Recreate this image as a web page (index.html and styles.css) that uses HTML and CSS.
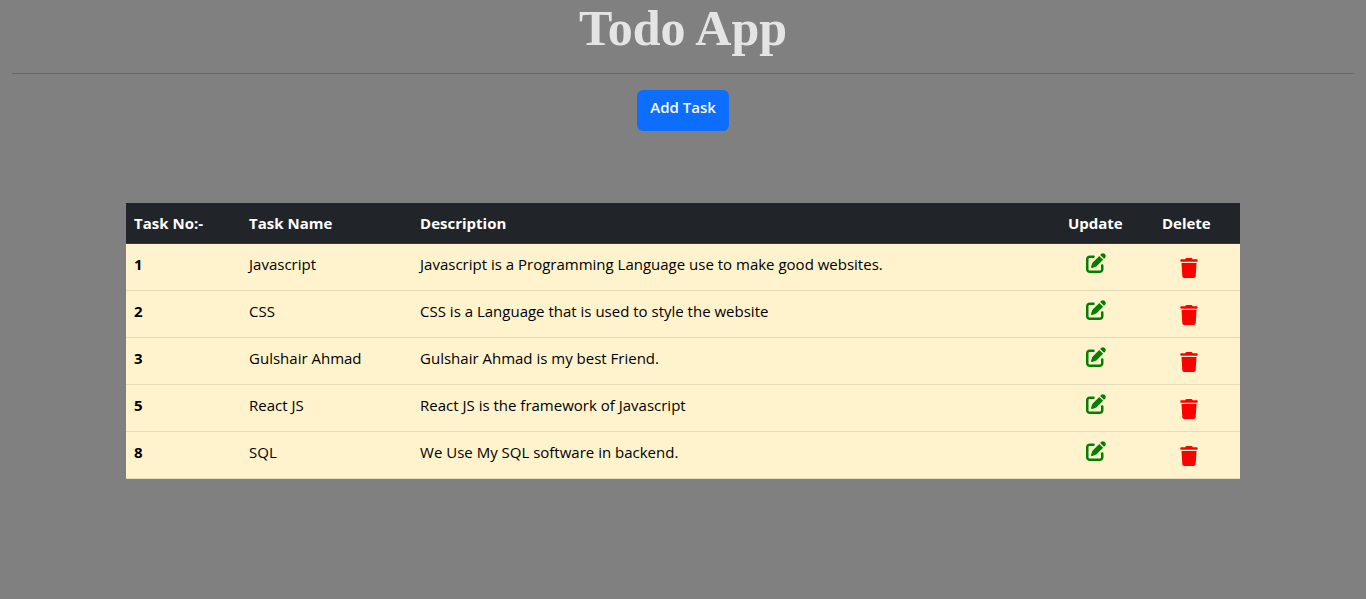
FILE: index.html
```html
<!DOCTYPE html>
<html lang="en">
<head>
  <meta charset="utf-8">
  <meta name="viewport" content="width=device-width, initial-scale=1">
  <title>Todo App</title>
  <link rel="stylesheet" href="styles.css">
</head>
<body>
  <svg class="sprite" aria-hidden="true">
    <symbol id="icon-edit" viewBox="0 0 512 512">
      <path d="M471.6 21.7c-21.9-21.9-57.3-21.9-79.2 0L362.3 51.7l97.9 97.9 30.1-30.1c21.9-21.9 21.9-57.3 0-79.2L471.6 21.7zm-299.2 220c-6.1 6.1-10.8 13.6-13.5 21.9l-29.6 88.8c-2.9 8.6-.6 18.1 5.8 24.6s15.9 8.7 24.6 5.8l88.8-29.6c8.2-2.7 15.7-7.4 21.9-13.5L437.7 172.3 339.7 74.3 172.4 241.7zM96 64C43 64 0 107 0 160V416c0 53 43 96 96 96H352c53 0 96-43 96-96V320c0-17.7-14.3-32-32-32s-32 14.3-32 32v96c0 17.7-14.3 32-32 32H96c-17.7 0-32-14.3-32-32V160c0-17.7 14.3-32 32-32h96c17.7 0 32-14.3 32-32s-14.3-32-32-32H96z"/>
    </symbol>
    <symbol id="icon-trash" viewBox="0 0 448 512">
      <path d="M135.2 17.7L128 32H32C14.3 32 0 46.3 0 64S14.3 96 32 96H416c17.7 0 32-14.3 32-32s-14.3-32-32-32H320l-7.2-14.3C307.4 6.8 296.3 0 284.2 0H163.8c-12.1 0-23.2 6.8-28.6 17.7zM416 128H32L53.2 467c1.6 25.3 22.6 45 47.9 45H346.9c25.3 0 46.3-19.7 47.9-45L416 128z"/>
    </symbol>
  </svg>
  <main class="page">
    <h1 class="title">Todo App</h1>
    <hr class="divider">
    <button class="add-button" type="button">Add Task</button>
    <table class="tasks">
      <colgroup>
        <col class="col-number"><col class="col-name"><col><col class="col-update"><col class="col-delete">
      </colgroup>
      <thead>
        <tr>
          <th scope="col">Task No:-</th>
          <th scope="col">Task Name</th>
          <th scope="col">Description</th>
          <th scope="col">Update</th>
          <th scope="col">Delete</th>
        </tr>
      </thead>
      <tbody>
        <tr>
          <th scope="row">1</th>
          <td>Javascript</td>
          <td>Javascript is a Programming Language use to make good websites.</td>
          <td><button class="icon-button edit" type="button" aria-label="Update task 1"><svg><use href="#icon-edit"/></svg></button></td>
          <td><button class="icon-button delete" type="button" aria-label="Delete task 1"><svg><use href="#icon-trash"/></svg></button></td>
        </tr>
        <tr>
          <th scope="row">2</th>
          <td>CSS</td>
          <td>CSS is a Language that is used to style the website</td>
          <td><button class="icon-button edit" type="button" aria-label="Update task 2"><svg><use href="#icon-edit"/></svg></button></td>
          <td><button class="icon-button delete" type="button" aria-label="Delete task 2"><svg><use href="#icon-trash"/></svg></button></td>
        </tr>
        <tr>
          <th scope="row">3</th>
          <td>Gulshair Ahmad</td>
          <td>Gulshair Ahmad is my best Friend.</td>
          <td><button class="icon-button edit" type="button" aria-label="Update task 3"><svg><use href="#icon-edit"/></svg></button></td>
          <td><button class="icon-button delete" type="button" aria-label="Delete task 3"><svg><use href="#icon-trash"/></svg></button></td>
        </tr>
        <tr>
          <th scope="row">5</th>
          <td>React JS</td>
          <td>React JS is the framework of Javascript</td>
          <td><button class="icon-button edit" type="button" aria-label="Update task 5"><svg><use href="#icon-edit"/></svg></button></td>
          <td><button class="icon-button delete" type="button" aria-label="Delete task 5"><svg><use href="#icon-trash"/></svg></button></td>
        </tr>
        <tr>
          <th scope="row">8</th>
          <td>SQL</td>
          <td>We Use My SQL software in backend.</td>
          <td><button class="icon-button edit" type="button" aria-label="Update task 8"><svg><use href="#icon-edit"/></svg></button></td>
          <td><button class="icon-button delete" type="button" aria-label="Delete task 8"><svg><use href="#icon-trash"/></svg></button></td>
        </tr>
      </tbody>
    </table>
  </main>
</body>
</html>
```

FILE: styles.css
```css
* {
  box-sizing: border-box;
}

body {
  margin: 0;
  background: #808080;
  color: #000;
  font-family: "Segoe UI", "Open Sans", "Noto Sans", sans-serif;
  font-size: 15px;
  line-height: 24px;
}

.sprite {
  display: none;
}

.page {
  display: flex;
  flex-direction: column;
  align-items: center;
  padding: 0 12px;
}

.title {
  margin: 0;
  color: #e4e4e4;
  font-family: "Times New Roman", "Liberation Serif", serif;
  font-size: 50px;
  font-weight: 700;
  line-height: 56px;
}

.divider {
  width: 100%;
  margin: 17px 0 16px;
  border: 0;
  border-top: 1px solid #686868;
}

.add-button {
  height: 41px;
  padding: 5px 13px 12px;
  border: 0;
  border-radius: 6px;
  background: #0d6efd;
  color: #f8f9fa;
  font: inherit;
  font-weight: 600;
  cursor: pointer;
}

.tasks {
  width: 83%;
  margin-top: 72px;
  border-collapse: separate;
  border-spacing: 0;
  table-layout: fixed;
  background: #fff3cd;
}

.col-number {
  width: 115px;
}

.col-name {
  width: 171px;
}

.col-update {
  width: 94px;
}

.col-delete {
  width: 86px;
}

.tasks th,
.tasks td {
  padding: 8px;
  border-bottom: 1px solid #e6dbb9;
  text-align: left;
  vertical-align: top;
}

.tasks thead th {
  border-bottom-color: #373b3e;
  background: #212529;
  color: #fff;
}

.tasks tbody tr {
  height: 47px;
}

.icon-button {
  display: block;
  margin-left: 18px;
  padding: 0;
  border: 0;
  background: none;
  cursor: pointer;
}

.icon-button svg {
  display: block;
  height: 20px;
  fill: currentColor;
}

.edit {
  margin-top: 1px;
  color: #008000;
}

.edit svg {
  width: 20px;
}

.delete {
  margin-top: 6px;
  color: #f00;
}

.delete svg {
  width: 18px;
}
```
